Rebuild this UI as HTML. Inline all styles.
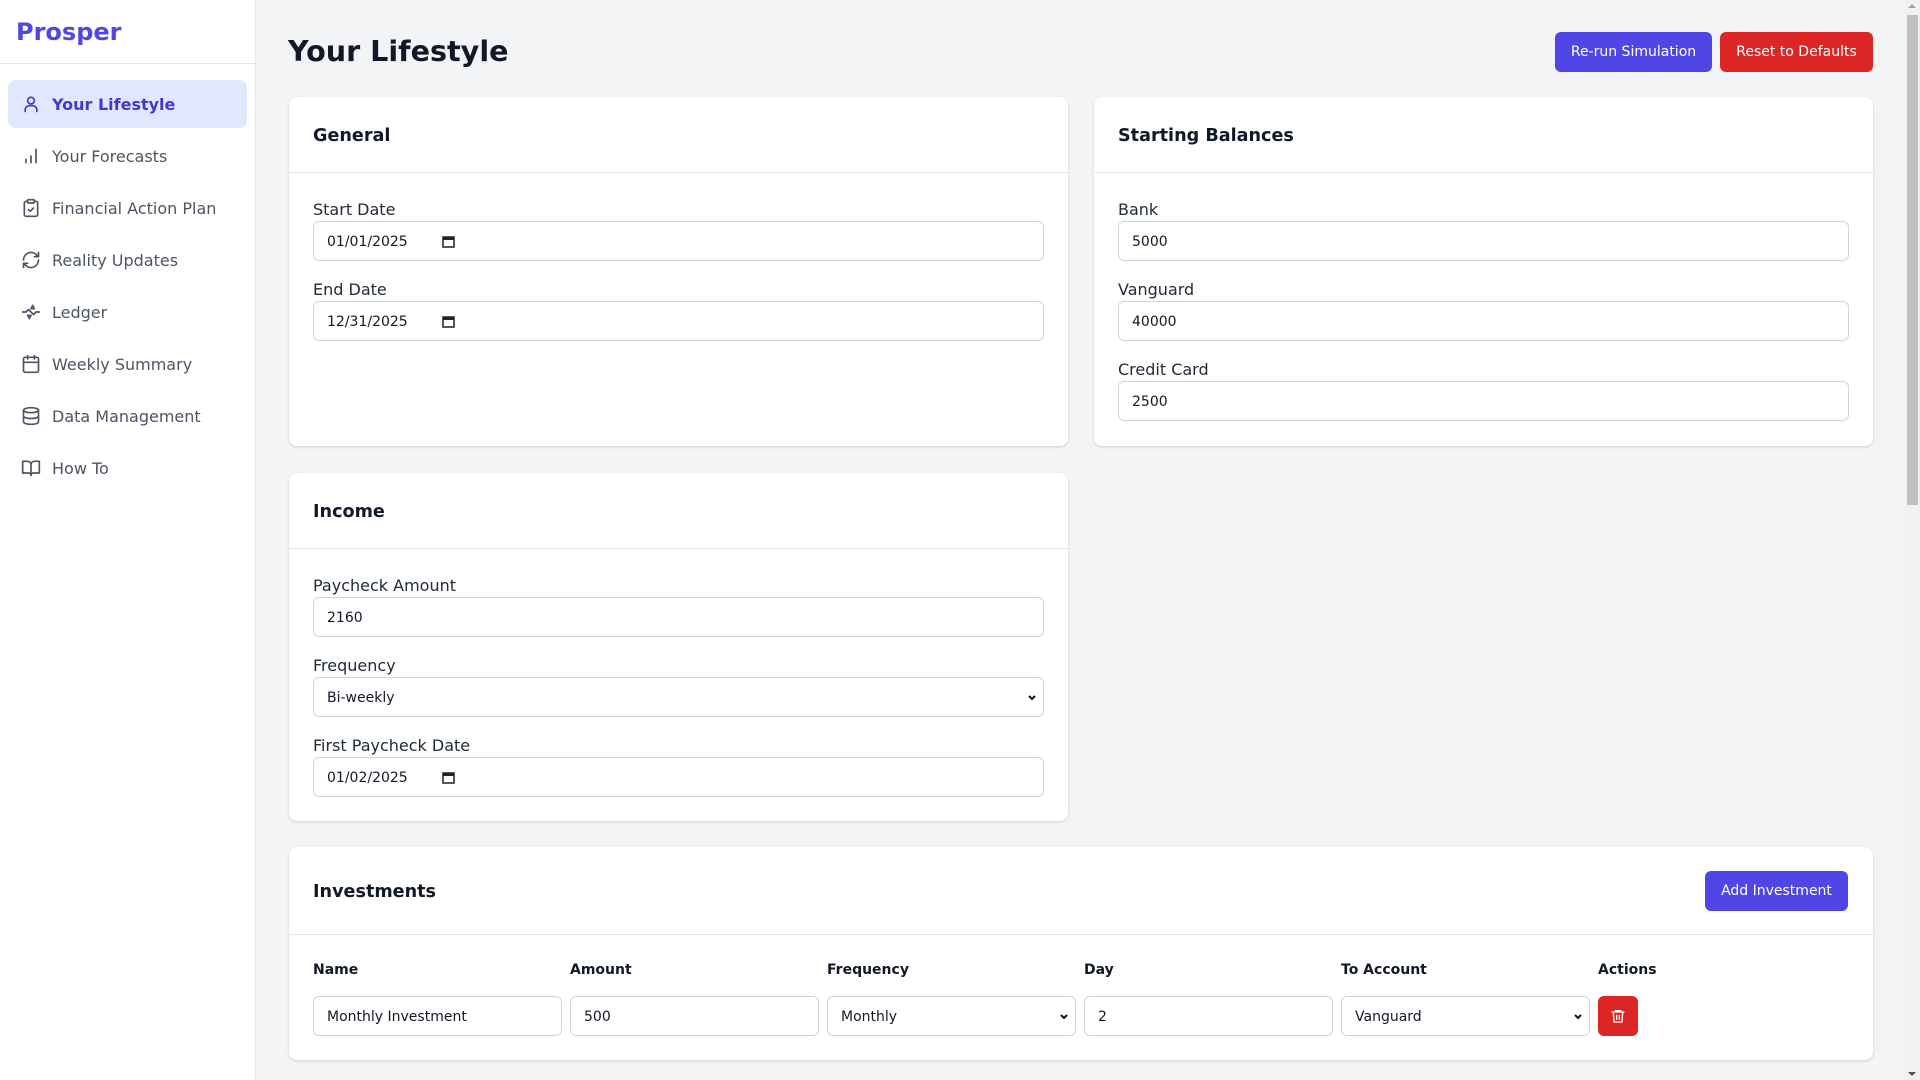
<!DOCTYPE html>
<html><head><meta charset="utf-8">
<style>
*{box-sizing:border-box;margin:0;padding:0}
html,body{width:1920px;height:1080px;overflow:hidden}
body{font-family:"DejaVu Sans","Liberation Sans",sans-serif;background:#f3f4f6;color:#111827;position:relative}
.side{position:absolute;left:0;top:0;width:256px;height:1080px;background:#fff;border-right:1px solid #e5e7eb}
.logo{height:64px;border-bottom:1px solid #e5e7eb;padding-left:16px;font-size:24px;font-weight:bold;color:#4f46e5;line-height:64px}
.nav{padding:16px 8px 0}
.item{height:48px;margin-bottom:4px;border-radius:8px;display:flex;align-items:center;padding-left:13px;font-size:16px;color:#4b5563}
.item svg{width:20px;height:20px;margin-right:11px;flex:none}
.item.act{background:#e0e7ff;color:#4338ca;font-weight:bold}
.main{position:absolute;left:256px;top:0;width:1649px;height:1080px}
h1{position:absolute;left:32px;top:31px;font-size:28.6px;font-weight:bold;line-height:40px;color:#111827}
.btn{position:absolute;height:40px;border-radius:6px;color:#fff;font-size:14px;display:flex;align-items:center;justify-content:center}
.card{position:absolute;background:#fff;border-radius:8px;box-shadow:0 1px 3px rgba(0,0,0,.1),0 1px 2px rgba(0,0,0,.06)}
.ch{height:76px;border-bottom:1px solid #e5e7eb;padding:0 24px;font-size:17.6px;font-weight:bold;line-height:78px;position:relative}
.cb{padding:24px 24px 0}
.lab{font-size:16px;line-height:26px;color:#1f2937;height:24px}
.inp{height:40px;border:1px solid #d1d5db;border-radius:6px;font-size:14px;padding-left:13px;padding-top:2px;display:flex;align-items:center;color:#111827;margin-bottom:16px;position:relative;background:#fff}
.cal{position:absolute;left:128px;top:13px;width:13px;height:13px}
.chev{position:absolute;right:6px;top:15px;width:10px;height:10px}
.th{position:absolute;font-size:14px;font-weight:bold;top:113px;line-height:21px}
.ri{position:absolute;top:149px;width:249px;margin:0}
.sb{position:absolute;right:0;top:0;width:15px;height:1080px;background:#f1f1f1}
</style></head><body>
<div class="side">
<div class="logo">Prosper</div>
<div class="nav">
<div class="item act"><svg viewBox="0 0 24 24" fill="none" stroke="#4338ca" stroke-width="2" stroke-linecap="round"><circle cx="12" cy="8" r="4"/><path d="M5 21v-2a5 5 0 0 1 5-5h4a5 5 0 0 1 5 5v2"/></svg>Your Lifestyle</div>
<div class="item"><svg viewBox="0 0 24 24" fill="none" stroke="#4b5563" stroke-width="2" stroke-linecap="round"><path d="M6 20v-4M12 20v-8M18 20V4"/></svg>Your Forecasts</div>
<div class="item"><svg viewBox="0 0 24 24" fill="none" stroke="#4b5563" stroke-width="2" stroke-linecap="round" stroke-linejoin="round"><rect x="8" y="2" width="8" height="4" rx="1"/><path d="M16 4h2a2 2 0 0 1 2 2v14a2 2 0 0 1-2 2H6a2 2 0 0 1-2-2V6a2 2 0 0 1 2-2h2"/><path d="m9 14 2 2 4-4"/></svg>Financial Action Plan</div>
<div class="item"><svg viewBox="0 0 24 24" fill="none" stroke="#4b5563" stroke-width="2" stroke-linecap="round" stroke-linejoin="round"><path d="M3 12a9 9 0 0 1 15-6.7L21 8M21 3v5h-5M21 12a9 9 0 0 1-15 6.7L3 16M8 16H3v5"/></svg>Reality Updates</div>
<div class="item"><svg viewBox="0 0 24 24" fill="none" stroke="#4b5563" stroke-width="2" stroke-linecap="round" stroke-linejoin="round"><path d="M2 12h4l3-3 6 6 3-3h4M14 4l2 4h-4zM10 20l-2-4h4z"/></svg>Ledger</div>
<div class="item"><svg viewBox="0 0 24 24" fill="none" stroke="#4b5563" stroke-width="2" stroke-linecap="round"><rect x="3" y="4" width="18" height="18" rx="2"/><path d="M16 2v4M8 2v4M3 10h18"/></svg>Weekly Summary</div>
<div class="item"><svg viewBox="0 0 24 24" fill="none" stroke="#4b5563" stroke-width="2"><ellipse cx="12" cy="5" rx="9" ry="3"/><path d="M3 5v14c0 1.7 4 3 9 3s9-1.3 9-3V5M3 12c0 1.7 4 3 9 3s9-1.3 9-3"/></svg>Data Management</div>
<div class="item"><svg viewBox="0 0 24 24" fill="none" stroke="#4b5563" stroke-width="2" stroke-linejoin="round"><path d="M2 4h6a4 4 0 0 1 4 4v13a3 3 0 0 0-3-3H2zM22 4h-6a4 4 0 0 0-4 4v13a3 3 0 0 1 3-3h7z"/></svg>How To</div>
</div></div>

<div class="main">
<h1>Your Lifestyle</h1>
<div class="btn" style="left:1299px;top:32px;width:157px;background:#4f46e5">Re-run Simulation</div>
<div class="btn" style="left:1464px;top:32px;width:153px;background:#dc2626">Reset to Defaults</div>

<div class="card" style="left:33px;top:97px;width:779px;height:349px">
<div class="ch">General</div>
<div class="cb">
<div class="lab">Start Date</div>
<div class="inp">01/01/2025<svg class="cal" viewBox="0 0 13 13"><rect x="1" y="2" width="11" height="10" fill="none" stroke="#222" stroke-width="1.5"/><rect x="1" y="2" width="11" height="3" fill="#222"/></svg></div>
<div class="lab">End Date</div>
<div class="inp">12/31/2025<svg class="cal" viewBox="0 0 13 13"><rect x="1" y="2" width="11" height="10" fill="none" stroke="#222" stroke-width="1.5"/><rect x="1" y="2" width="11" height="3" fill="#222"/></svg></div>
</div></div>

<div class="card" style="left:838px;top:97px;width:779px;height:349px">
<div class="ch">Starting Balances</div>
<div class="cb">
<div class="lab">Bank</div><div class="inp">5000</div>
<div class="lab">Vanguard</div><div class="inp">40000</div>
<div class="lab">Credit Card</div><div class="inp">2500</div>
</div></div>

<div class="card" style="left:33px;top:473px;width:779px;height:348px">
<div class="ch">Income</div>
<div class="cb">
<div class="lab">Paycheck Amount</div><div class="inp">2160</div>
<div class="lab">Frequency</div><div class="inp">Bi-weekly<svg class="chev" viewBox="0 0 10 10"><path d="M2 3l3 3 3-3" fill="none" stroke="#111" stroke-width="2"/></svg></div>
<div class="lab">First Paycheck Date</div>
<div class="inp">01/02/2025<svg class="cal" viewBox="0 0 13 13"><rect x="1" y="2" width="11" height="10" fill="none" stroke="#222" stroke-width="1.5"/><rect x="1" y="2" width="11" height="3" fill="#222"/></svg></div>
</div></div>

<div class="card" style="left:33px;top:847px;width:1584px;height:213px">
<div class="ch" style="height:88px;line-height:90px">Investments
<div class="btn" style="left:1416px;top:24px;width:143px;background:#4f46e5;font-weight:normal;line-height:normal">Add Investment</div></div>
<div class="th" style="left:24px">Name</div>
<div class="th" style="left:281px">Amount</div>
<div class="th" style="left:538px">Frequency</div>
<div class="th" style="left:795px">Day</div>
<div class="th" style="left:1052px">To Account</div>
<div class="th" style="left:1309px">Actions</div>
<div class="inp ri" style="left:24px">Monthly Investment</div>
<div class="inp ri" style="left:281px">500</div>
<div class="inp ri" style="left:538px">Monthly<svg class="chev" viewBox="0 0 10 10"><path d="M2 3l3 3 3-3" fill="none" stroke="#111" stroke-width="2"/></svg></div>
<div class="inp ri" style="left:795px">2</div>
<div class="inp ri" style="left:1052px">Vanguard<svg class="chev" viewBox="0 0 10 10"><path d="M2 3l3 3 3-3" fill="none" stroke="#111" stroke-width="2"/></svg></div>
<div style="position:absolute;left:1309px;top:149px;width:40px;height:40px;background:#dc2626;border-radius:6px;display:flex;align-items:center;justify-content:center"><svg width="16" height="16" viewBox="0 0 24 24" fill="none" stroke="#fff" stroke-width="2" stroke-linecap="round"><path d="M3 6h18M8 6V4h8v2M5 6l1 15h12l1-15M10 11v6M14 11v6"/></svg></div>
</div>
</div>
<div class="sb"><div style="position:absolute;left:2px;top:15px;width:11px;height:490px;background:#c1c1c1"></div>
<div style="position:absolute;left:3px;top:4px;width:0;height:0;border-left:4px solid transparent;border-right:4px solid transparent;border-bottom:4px solid #a3a3a3"></div>
<div style="position:absolute;left:3px;bottom:4px;width:0;height:0;border-left:4px solid transparent;border-right:4px solid transparent;border-top:4px solid #505050"></div></div>
</body></html>
